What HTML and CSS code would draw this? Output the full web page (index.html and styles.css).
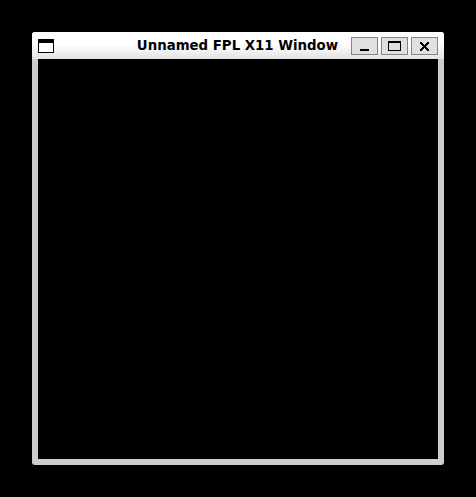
FILE: index.html
```html
<!DOCTYPE html>
<html lang="en">
<head>
<meta charset="utf-8">
<title>Unnamed FPL X11 Window</title>
<link rel="stylesheet" href="styles.css">
</head>
<body>
<main class="window">
  <header class="titlebar">
    <svg class="app-icon" width="16" height="14" viewBox="0 0 16 14" shape-rendering="crispEdges"><path d="M0 0h16v14H0z"/><path fill="#fff" d="M1 4h14v9H1z"/></svg>
    <h1 class="title">Unnamed FPL X11 Window</h1>
    <div class="controls">
      <button class="control" aria-label="Minimize"><svg width="25" height="16" shape-rendering="crispEdges"><path d="M8 11h9v2H8z"/></svg></button>
      <button class="control" aria-label="Maximize"><svg width="25" height="16" shape-rendering="crispEdges"><path fill-rule="evenodd" d="M6 3h13v10H6zM7 5v7h11V5z"/></svg></button>
      <button class="control" aria-label="Close"><svg width="25" height="16" shape-rendering="crispEdges"><path d="M8 4h2v1h1v1h1v1h1V6h1V5h1V4h2v2h-1v1h-1v1h-1v1h1v1h1v1h1v2h-2v-1h-1v-1h-1v-1h-1v1h-1v1h-1v1H8v-2h1v-1h1V9h1V8h-1V7H9V6H8z"/></svg></button>
    </div>
  </header>
  <section class="canvas"></section>
</main>
</body>
</html>
```
FILE: styles.css
```css
body {
  margin: 0;
  padding: 32px;
  box-sizing: border-box;
  height: 497px;
  background: #000;
  overflow: hidden;
}
.window {
  box-sizing: border-box;
  width: 412px;
  height: 433px;
  display: flex;
  flex-direction: column;
  background: #cdcdcd;
  border-radius: 3px;
  overflow: hidden;
}
.titlebar {
  box-sizing: border-box;
  height: 27px;
  padding: 0 6px;
  display: flex;
  align-items: center;
  background: linear-gradient(#fff 45%, #e2e2e2);
}
.app-icon {
  margin-top: 1px;
}
.title {
  flex: 1;
  margin: 0 13px 0 0;
  text-align: right;
  white-space: nowrap;
  font: bold 13.33px/27px "DejaVu Sans", sans-serif;
  color: #000;
}
.controls {
  display: flex;
  gap: 3px;
  margin-top: 1px;
}
.control {
  box-sizing: border-box;
  width: 27px;
  height: 18px;
  padding: 0;
  border: 1px solid #858585;
  background: #e0e0e0;
}
.control svg {
  display: block;
}
.canvas {
  flex: 1;
  margin: 0 6px 6px;
  background: #000;
}
```
